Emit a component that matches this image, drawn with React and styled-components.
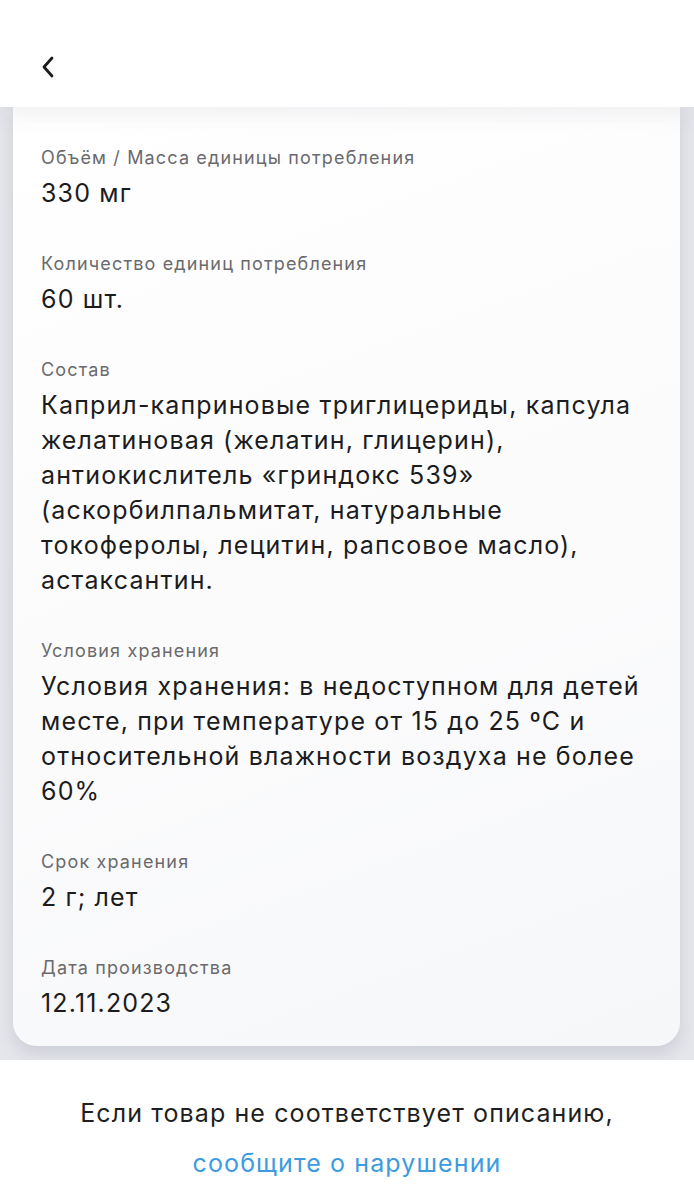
import React from 'react';
import styled, { createGlobalStyle } from 'styled-components';

const Global = createGlobalStyle`
  html, body {
    margin: 0;
    padding: 0;
    background: #ffffff;
  }
  body {
    font-family: Inter, Roboto, "Noto Sans", "Liberation Sans", sans-serif;
    -webkit-font-smoothing: antialiased;
  }
`;

const Page = styled.div`
  width: 694px;
  height: 1200px;
  display: flex;
  flex-direction: column;
  overflow: hidden;
  background: #ffffff;
`;

const Header = styled.header`
  height: 107px;
  flex: none;
  display: flex;
  align-items: center;
  padding: 26px 0 0 36px;
  box-sizing: border-box;
  background: #ffffff;
  position: relative;
  z-index: 2;
  box-shadow: 0 6px 22px rgba(120, 124, 140, 0.12);
`;

const BackButton = styled.button`
  border: 0;
  background: none;
  padding: 0;
  width: 24px;
  height: 28px;
  display: flex;
  align-items: center;
  justify-content: center;
  cursor: pointer;
`;

const Scroller = styled.main`
  height: 953px;
  flex: none;
  background: #e5e6eb;
  padding: 0 14px 0 13px;
  box-sizing: border-box;
  overflow: hidden;
`;

const Card = styled.section`
  background: linear-gradient(160deg, #ffffff 0%, #fbfbfc 55%, #f6f7f9 100%);
  border-radius: 0 0 24px 24px;
  padding: 39px 33px 25px 28px;
  display: flex;
  flex-direction: column;
  gap: 41px;
  box-shadow: 0 8px 16px rgba(110, 115, 135, 0.2);
`;

const Field = styled.div`
  display: flex;
  flex-direction: column;
  gap: 6px;
`;

const Label = styled.div`
  font-size: 18px;
  line-height: 24px;
  letter-spacing: 1.15px;
  color: #6a6a6d;
`;

const Value = styled.div`
  font-size: 25px;
  line-height: 35px;
  letter-spacing: 1.15px;
  color: #1c1c1e;
`;

const Footer = styled.footer`
  flex: 1;
  display: flex;
  flex-direction: column;
  align-items: center;
  padding-top: 28px;
  font-size: 25px;
  line-height: 50px;
  letter-spacing: 1.1px;
  color: #1f1f21;
`;

const ReportLink = styled.a`
  color: #3d9be0;
  text-decoration: none;
`;

const fields = [
  ['Объём / Масса единицы потребления', '330 мг'],
  ['Количество единиц потребления', '60 шт.'],
  [
    'Состав',
    'Каприл-каприновые триглицериды, капсула желатиновая (желатин, глицерин), антиокислитель «гриндокс 539» (аскорбилпальмитат, натуральные токоферолы, лецитин, рапсовое масло), астаксантин.',
  ],
  [
    'Условия хранения',
    'Условия хранения: в недоступном для детей месте, при температуре от 15 до 25 ºС и относительной влажности воздуха не более 60%',
  ],
  ['Срок хранения', '2 г; лет'],
  ['Дата производства', '12.11.2023'],
];

export default function App() {
  return (
    <Page>
      <Global />
      <Header>
        <BackButton aria-label="Назад">
          <svg width="14" height="22" viewBox="0 0 14 22" fill="none">
            <path d="M11 2 L3 11 L11 20" stroke="#1c1c1e" strokeWidth="2.8" strokeLinecap="round" strokeLinejoin="round" />
          </svg>
        </BackButton>
      </Header>
      <Scroller>
        <Card>
          {fields.map(([label, value]) => (
            <Field key={label}>
              <Label>{label}</Label>
              <Value>{value}</Value>
            </Field>
          ))}
        </Card>
      </Scroller>
      <Footer>
        <div>Если товар не соответствует описанию,</div>
        <ReportLink href="#">сообщите о нарушении</ReportLink>
      </Footer>
    </Page>
  );
}
